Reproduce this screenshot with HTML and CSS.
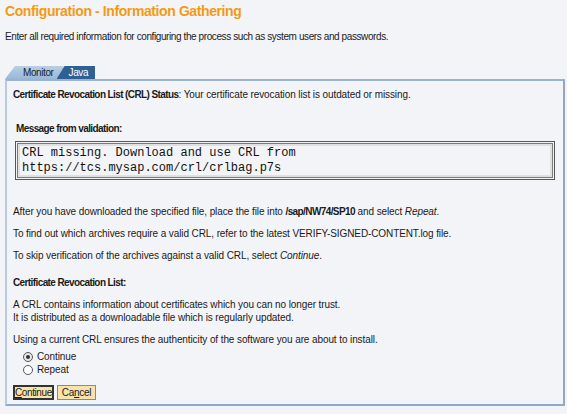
FILE: index.html
```html
<!DOCTYPE html>
<html lang="en">
<head>
  <meta charset="UTF-8" />
  <title>Configuration - Information Gathering</title>
  <link rel="stylesheet" href="styles.css">
</head>
<body>
  <h1 class="titulo">Configuration - Information Gathering</h1>
  <p class="intro">Enter all required information for configuring the process such as system users and passwords.</p>

  <div class="tabs">
    <span class="tab tab-monitor">Monitor</span>
    <span class="tab tab-java">Java</span>
  </div>

  <div class="panel">
    <p class="estado"><b>Certificate Revocation List (CRL) Status</b>: Your certificate revocation list is outdated or missing.</p>

    <div class="validacion">
      <div class="etiqueta">Message from validation:</div>
      <div class="mensaje">CRL missing. Download and use CRL from
https://tcs.mysap.com/crl/crlbag.p7s</div>
    </div>

    <p class="texto primero">After you have downloaded the specified file, place the file into <b>/sap/NW74/SP10</b> and select <i>Repeat</i>.</p>
    <p class="texto">To find out which archives require a valid CRL, refer to the latest VERIFY-SIGNED-CONTENT.log file.</p>
    <p class="texto">To skip verification of the archives against a valid CRL, select <i>Continue</i>.</p>

    <p class="subtitulo">Certificate Revocation List:</p>
    <p class="texto">A CRL contains information about certificates which you can no longer trust.<br>It is distributed as a downloadable file which is regularly updated.</p>
    <p class="texto">Using a current CRL ensures the authenticity of the software you are about to install.</p>

    <div class="opciones">
      <label class="opcion"><span class="radio marcado"></span>Continue</label>
      <label class="opcion"><span class="radio"></span>Repeat</label>
    </div>

    <div class="botones">
      <button class="boton activo"><u>C</u>ontinue</button>
      <button class="boton">Ca<u>n</u>cel</button>
    </div>
  </div>
</body>
</html>
```
FILE: styles.css
```css
body {
  margin: 0;
  padding: 2px 2px 0 5px;
  font-family: 'Liberation Sans', Arial, sans-serif;
  font-size: 10px;
  letter-spacing: -0.4px;
  background-color: #f3f4f8;
  color: #1a1a1a;
}

.titulo {
  margin: 0;
  font-size: 14px;
  letter-spacing: -0.4px;
  font-weight: bold;
  color: #f39a12;
  line-height: 18px;
}

.intro {
  margin: 10px 0 0;
  line-height: 13px;
}

.tabs {
  display: flex;
  margin-top: 23px;
  height: 13px;
}

.tab {
  display: flex;
  align-items: center;
  height: 13px;
}

.tab-monitor {
  background: linear-gradient(#b9cfe6, #98b7d7);
  color: #1c1c1c;
  padding: 0 10px 0 18px;
  clip-path: polygon(10px 0, 100% 0, 100% 100%, 0 100%);
}

.tab-java {
  background: #2f5f93;
  color: #fff;
  padding: 0 7px 0 12px;
  margin-left: -7px;
  clip-path: polygon(8px 0, 100% 0, 100% 100%, 0 100%);
}

.panel {
  border-top: 2px solid #9ab3cf;
  border-left: 2px solid #b9cadd;
  border-right: 2px solid #8fa9c6;
  border-bottom: 2px solid #8fa9c6;
  padding: 7px 6px 4px 6px;
  letter-spacing: -0.1px;
}

.panel b,
.etiqueta,
.subtitulo {
  letter-spacing: -0.6px;
}

.estado {
  margin: 0;
  line-height: 14px;
}

.validacion {
  margin: 20px 2px 0 3px;
}

.etiqueta {
  font-weight: bold;
  line-height: 13px;
}

.mensaje {
  margin-top: 6px;
  margin-left: -1px;
  border: 1px solid #555;
  box-shadow: inset 0 0 0 1px #f4f4f4, inset 0 0 0 2px #7a7a7a, inset 0 0 0 4px #e0e0e0;
  padding: 4px 3px 3px 6px;
  font-family: 'Liberation Mono', 'Courier New', monospace;
  font-size: 12px;
  letter-spacing: 0;
  line-height: 15px;
  white-space: pre;
  color: #111;
}

.texto {
  margin: 9px 0 0;
  line-height: 13px;
}

.texto.primero {
  margin-top: 25px;
}

.subtitulo {
  margin: 14px 0 0;
  font-weight: bold;
  line-height: 13px;
}

.opciones {
  margin: 5px 0 0 10px;
  display: flex;
  flex-direction: column;
  gap: 1px;
}

.opcion {
  display: flex;
  align-items: center;
  gap: 4px;
  line-height: 12px;
}

.radio {
  width: 8px;
  height: 8px;
  border: 1px solid #555;
  border-radius: 50%;
  background: #fff;
  position: relative;
}

.radio.marcado {
  background: #e8e8e8;
}

.radio.marcado::after {
  content: '';
  position: absolute;
  left: 2px;
  top: 2px;
  width: 4px;
  height: 4px;
  border-radius: 50%;
  background: #333;
}

.botones {
  display: flex;
  gap: 3px;
  margin-top: 9px;
}

.boton {
  font-family: 'Liberation Sans', Arial, sans-serif;
  font-size: 10px;
  letter-spacing: -0.3px;
  background: #f7e3ac;
  border: 1px solid #8a8a8a;
  color: #1a1a1a;
  height: 15px;
  padding: 0 4px;
  line-height: 12px;
}

.boton.activo {
  border: 2px solid #333;
  padding: 0;
  letter-spacing: -0.4px;
}
```
